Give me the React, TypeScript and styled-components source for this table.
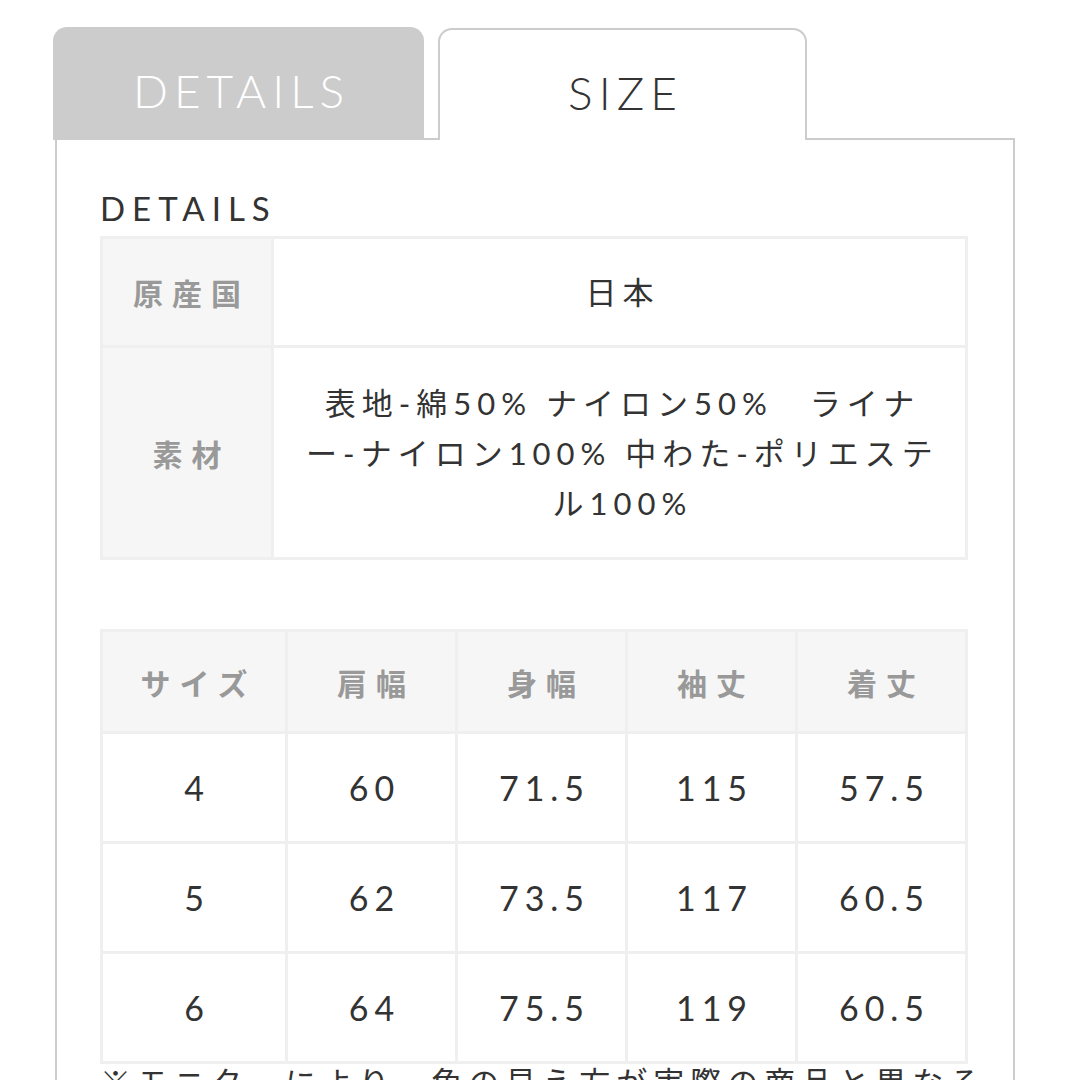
import React from 'react';
import styled, { createGlobalStyle } from 'styled-components';

const GlobalStyle = createGlobalStyle`
  html, body {
    margin: 0;
    padding: 0;
    background: #ffffff;
  }
  body {
    font-family: Lato, "Noto Sans CJK JP", sans-serif;
    color: #333333;
    overflow: hidden;
  }
`;

const Page = styled.div`
  width: 962px;
  margin-left: 53px;
  padding-top: 27px;
`;

const TabBar = styled.div`
  display: flex;
  align-items: flex-end;
  height: 113px;
`;

const Tab = styled.div<{ $active?: boolean }>`
  box-sizing: border-box;
  width: ${(p) => (p.$active ? '369px' : '371px')};
  height: ${(p) => (p.$active ? '112px' : '113px')};
  display: flex;
  align-items: center;
  justify-content: center;
  padding: 14px 0 0 6px;
  border-radius: 14px 14px 0 0;
  background: ${(p) => (p.$active ? '#ffffff' : '#cccccc')};
  border: ${(p) => (p.$active ? '2px solid #cccccc' : 'none')};
  border-bottom: none;
  color: ${(p) => (p.$active ? '#333333' : '#ffffff')};
  font-family: Lato, sans-serif;
  font-weight: 300;
  font-size: 46px;
  letter-spacing: 6px;
`;

const TabGap = styled.div<{ $grow?: boolean }>`
  box-sizing: border-box;
  width: 14px;
  flex: ${(p) => (p.$grow ? 1 : 'none')};
  border-bottom: 2px solid #cccccc;
  border-right: ${(p) => (p.$grow ? '2px solid #cccccc' : 'none')};
  height: 2px;
  align-self: flex-end;
`;

const Panel = styled.div`
  margin-left: 2px;
  border-left: 2px solid #cccccc;
  border-right: 2px solid #cccccc;
  padding: 48px 45px 0 43px;
  height: 1000px;
`;

const Heading = styled.h2`
  margin: 0 0 8px;
  font-family: Lato, sans-serif;
  font-weight: 400;
  font-size: 33px;
  line-height: 40px;
  letter-spacing: 7px;
  color: #333333;
`;

const Table = styled.table<{ $gap?: number }>`
  width: 868px;
  border-collapse: collapse;
  margin-bottom: ${(p) => p.$gap ?? 0}px;
  table-layout: fixed;
`;

const Label = styled.th<{ $width?: number; $height?: number }>`
  width: ${(p) => (p.$width ? `${p.$width}px` : 'auto')};
  height: ${(p) => (p.$height ? `${p.$height}px` : 'auto')};
  background: #f6f6f6;
  border: 3px solid #efefef;
  color: #999999;
  font-family: "Noto Sans CJK JP", sans-serif;
  font-weight: 700;
  font-size: 30px;
  letter-spacing: 9px;
  text-align: center;
  padding: 0 0 0 9px;
  box-sizing: border-box;
`;

const Value = styled.td<{ $height?: number }>`
  height: ${(p) => (p.$height ? `${p.$height}px` : 'auto')};
  border: 3px solid #efefef;
  color: #333333;
  font-family: Lato, "Noto Sans CJK JP", sans-serif;
  font-size: 31px;
  line-height: 50px;
  letter-spacing: 6px;
  text-align: center;
  padding: 0 22px 0 28px;
  box-sizing: border-box;
`;

const Num = styled.td`
  height: 110px;
  border: 3px solid #efefef;
  color: #333333;
  font-family: Lato, sans-serif;
  font-size: 34px;
  letter-spacing: 6px;
  text-align: center;
  padding: 0 0 0 6px;
  box-sizing: border-box;
`;

const Note = styled.p`
  margin: 0;
  font-family: Lato, "Noto Sans CJK JP", sans-serif;
  font-size: 31px;
  line-height: 36px;
  color: #333333;
  letter-spacing: 6px;
  white-space: nowrap;
`;

const headers = ['サイズ', '肩幅', '身幅', '袖丈', '着丈'];
const rows = [
  ['4', '60', '71.5', '115', '57.5'],
  ['5', '62', '73.5', '117', '60.5'],
  ['6', '64', '75.5', '119', '60.5'],
];

export default function App() {
  return (
    <>
      <GlobalStyle />
      <Page>
        <TabBar>
          <Tab>DETAILS</Tab>
          <TabGap />
          <Tab $active>SIZE</Tab>
          <TabGap $grow />
        </TabBar>
        <Panel>
          <Heading>DETAILS</Heading>
          <Table $gap={69}>
            <tbody>
              <tr>
                <Label $width={171} $height={109}>原産国</Label>
                <Value $height={109}>日本</Value>
              </tr>
              <tr>
                <Label $height={212}>素材</Label>
                <Value $height={212}>
                  表地-綿50% ナイロン50%　ライナー-ナイロン100% 中わた-ポリエステル100%
                </Value>
              </tr>
            </tbody>
          </Table>
          <Table>
            <thead>
              <tr>
                {headers.map((h, i) => (
                  <Label key={h} $width={i === 0 ? 185 : undefined} $height={102}>
                    {h}
                  </Label>
                ))}
              </tr>
            </thead>
            <tbody>
              {rows.map((r) => (
                <tr key={r[0]}>
                  {r.map((v, i) => (
                    <Num key={i}>{v}</Num>
                  ))}
                </tr>
              ))}
            </tbody>
          </Table>
          <Note>※モニターにより、色の見え方が実際の商品と異なる</Note>
        </Panel>
      </Page>
    </>
  );
}
